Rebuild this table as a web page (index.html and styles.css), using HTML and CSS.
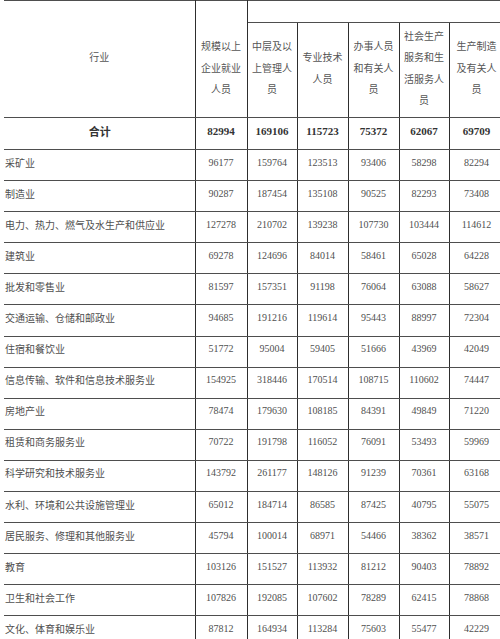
FILE: index.html
```html
<!DOCTYPE html>
<html lang="zh-CN">
<head>
<meta charset="utf-8">
<title>分行业分岗位就业人员年平均工资</title>
<link rel="stylesheet" href="styles.css">
</head>
<body>
<table class="stats">
  <colgroup>
    <col class="c-name">
    <col class="c-a">
    <col class="c-b">
    <col class="c-c">
    <col class="c-c">
    <col class="c-b">
    <col class="c-last">
  </colgroup>
  <thead>
    <tr class="h1">
      <th rowspan="2" class="h-name">行业</th>
      <th rowspan="2" class="h-main">规模以上<br>企业就业<br>人员</th>
      <th colspan="5" class="h-top"></th>
    </tr>
    <tr class="h2">
      <th>中层及以<br>上管理人<br>员</th>
      <th>专业技术<br>人员</th>
      <th>办事人员<br>和有关人<br>员</th>
      <th>社会生产<br>服务和生<br>活服务人<br>员</th>
      <th>生产制造<br>及有关人<br>员</th>
    </tr>
  </thead>
  <tbody>
    <tr class="total"><td class="name">合计</td><td>82994</td><td>169106</td><td>115723</td><td>75372</td><td>62067</td><td>69709</td></tr>
    <tr><td class="name">采矿业</td><td>96177</td><td>159764</td><td>123513</td><td>93406</td><td>58298</td><td>82294</td></tr>
    <tr><td class="name">制造业</td><td>90287</td><td>187454</td><td>135108</td><td>90525</td><td>82293</td><td>73408</td></tr>
    <tr><td class="name">电力、热力、燃气及水生产和供应业</td><td>127278</td><td>210702</td><td>139238</td><td>107730</td><td>103444</td><td>114612</td></tr>
    <tr><td class="name">建筑业</td><td>69278</td><td>124696</td><td>84014</td><td>58461</td><td>65028</td><td>64228</td></tr>
    <tr><td class="name">批发和零售业</td><td>81597</td><td>157351</td><td>91198</td><td>76064</td><td>63088</td><td>58627</td></tr>
    <tr><td class="name">交通运输、仓储和邮政业</td><td>94685</td><td>191216</td><td>119614</td><td>95443</td><td>88997</td><td>72304</td></tr>
    <tr><td class="name">住宿和餐饮业</td><td>51772</td><td>95004</td><td>59405</td><td>51666</td><td>43969</td><td>42049</td></tr>
    <tr><td class="name">信息传输、软件和信息技术服务业</td><td>154925</td><td>318446</td><td>170514</td><td>108715</td><td>110602</td><td>74447</td></tr>
    <tr><td class="name">房地产业</td><td>78474</td><td>179630</td><td>108185</td><td>84391</td><td>49849</td><td>71220</td></tr>
    <tr><td class="name">租赁和商务服务业</td><td>70722</td><td>191798</td><td>116052</td><td>76091</td><td>53493</td><td>59969</td></tr>
    <tr><td class="name">科学研究和技术服务业</td><td>143792</td><td>261177</td><td>148126</td><td>91239</td><td>70361</td><td>63168</td></tr>
    <tr><td class="name">水利、环境和公共设施管理业</td><td>65012</td><td>184714</td><td>86585</td><td>87425</td><td>40795</td><td>55075</td></tr>
    <tr><td class="name">居民服务、修理和其他服务业</td><td>45794</td><td>100014</td><td>68971</td><td>54466</td><td>38362</td><td>38571</td></tr>
    <tr><td class="name">教育</td><td>103126</td><td>151527</td><td>113932</td><td>81212</td><td>90403</td><td>78892</td></tr>
    <tr><td class="name">卫生和社会工作</td><td>107826</td><td>192085</td><td>107602</td><td>78289</td><td>62415</td><td>78868</td></tr>
    <tr><td class="name">文化、体育和娱乐业</td><td>87812</td><td>164934</td><td>113284</td><td>75603</td><td>55477</td><td>42229</td></tr>
  </tbody>
</table>
</body>
</html>
```
FILE: styles.css
```css
html, body {
  margin: 0;
  padding: 0;
  background: #ffffff;
  overflow: hidden;
}

body {
  font-family: "Noto Sans CJK SC", "Noto Sans", sans-serif;
  color: #555555;
}

.stats {
  margin-left: 4px;
  border-collapse: collapse;
  table-layout: fixed;
  width: 500px;
}

.c-name { width: 191px; }
.c-a { width: 52px; }
.c-b { width: 50px; }
.c-c { width: 51px; }
.c-last { width: 55px; }

.stats th,
.stats td {
  border-top: 1px solid #4e4e4e;
  border-bottom: 1px solid #4e4e4e;
  border-left: 1px solid #2e2e2e;
  border-right: 1px solid #2e2e2e;
  padding: 0 0 5px 0;
  text-align: center;
  vertical-align: middle;
  overflow: hidden;
  white-space: nowrap;
}

.stats th {
  font-weight: normal;
  font-size: 10px;
  line-height: 21.5px;
  color: #555555;
}

.stats .h-name,
.stats .name {
  border-left: none;
}

.stats .h-main {
  padding-top: 22px;
}

.h1 { height: 22px; }
.h2 { height: 95px; }

.stats td {
  font-family: "Liberation Serif", "Noto Sans CJK SC", serif;
  font-size: 10px;
  line-height: 14px;
  color: #4f4f4f;
}

.stats td.name {
  font-family: "Noto Sans CJK SC", "Noto Sans", sans-serif;
  text-align: left;
  padding-left: 1px;
}

.stats tbody tr { height: 31.1px; }

.stats tr.total { height: 32px; }

.stats tr.total td {
  font-weight: bold;
  font-size: 11px;
  color: #333333;
}

.stats tr.total td.name {
  text-align: center;
  font-size: 11px;
}
```
